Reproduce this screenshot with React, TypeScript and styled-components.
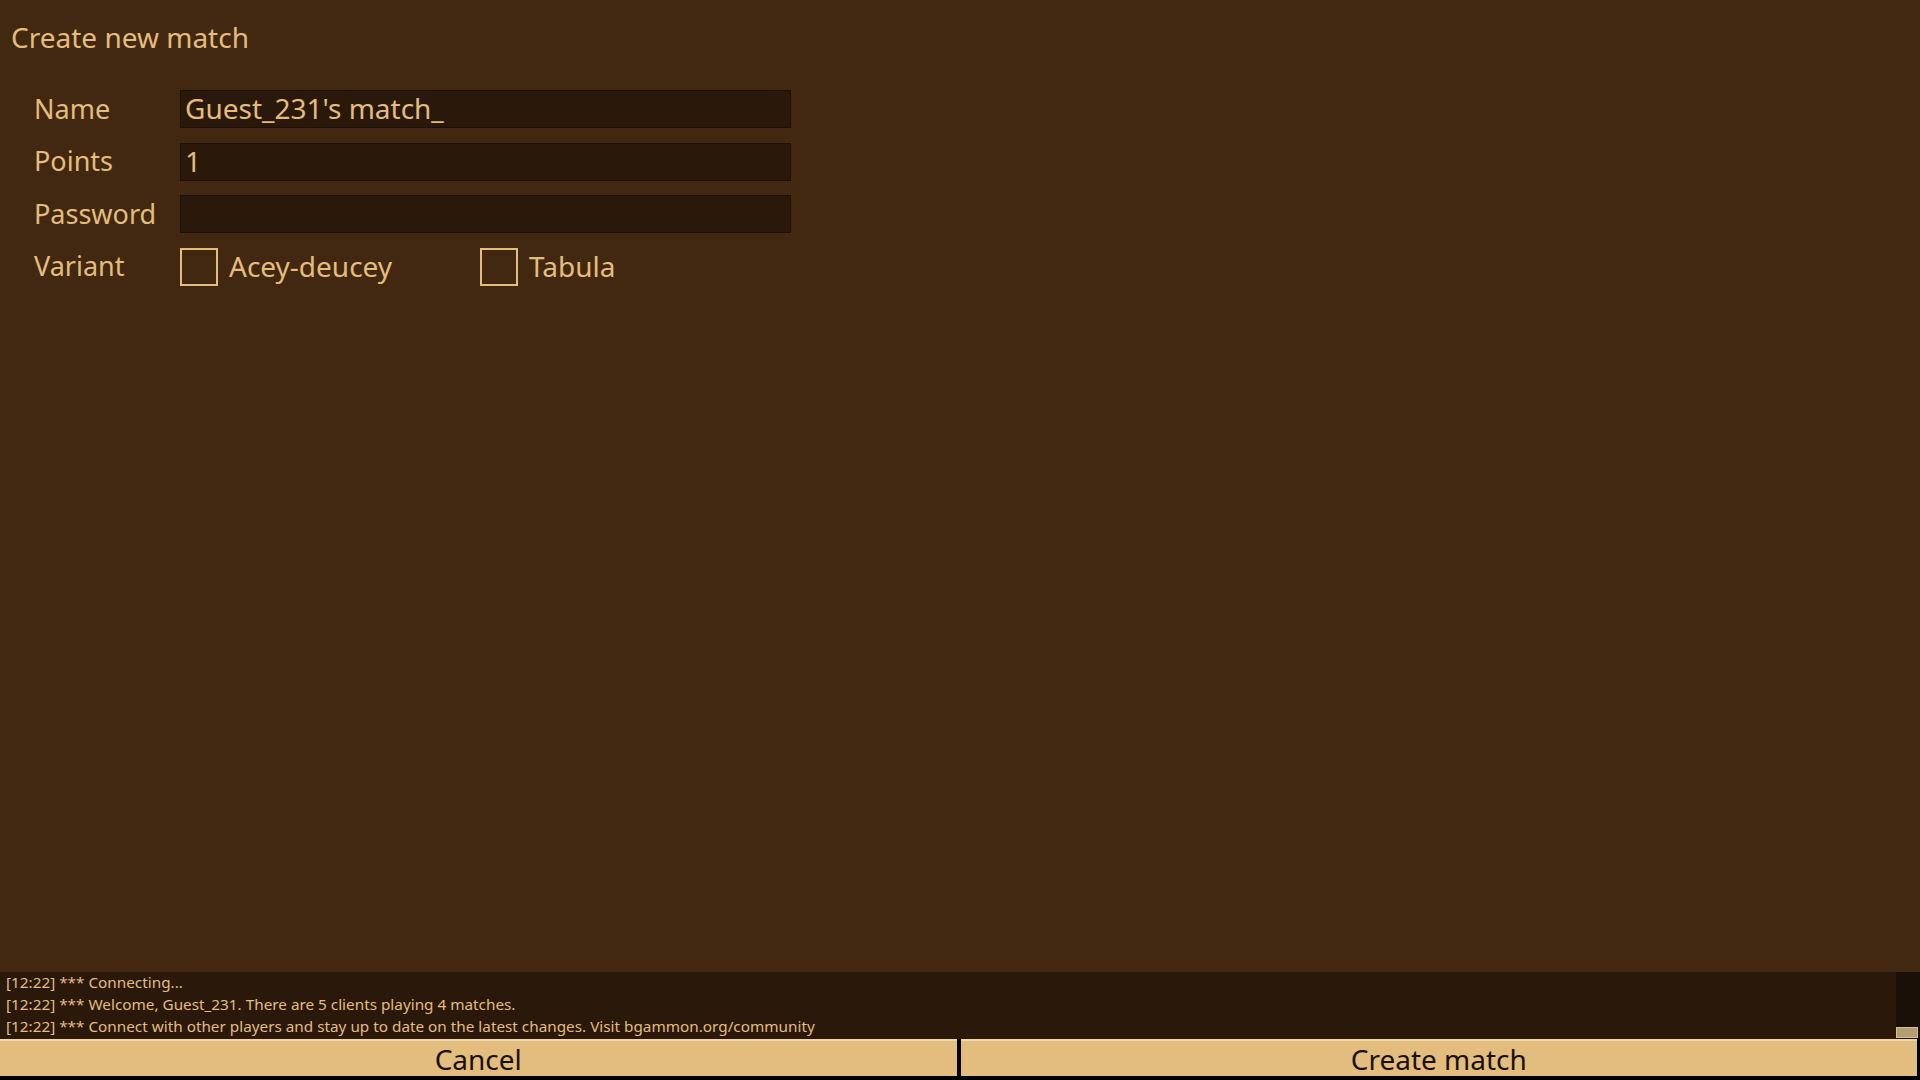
import React from 'react';
import styled, { createGlobalStyle } from 'styled-components';

const GlobalStyle = createGlobalStyle`
    html, body {
        margin: 0;
        padding: 0;
        background: #000;
    }
    * {
        box-sizing: border-box;
    }
`;

const FONT = `"Noto Sans", "Open Sans", sans-serif`;
const TAN = '#e3bd7e';

const logLines = [
    '[12:22] *** Connecting...',
    '[12:22] *** Welcome, Guest_231. There are 5 clients playing 4 matches.',
    '[12:22] *** Connect with other players and stay up to date on the latest changes. Visit bgammon.org/community',
];

const App = () => {
    return (
        <>
            <GlobalStyle />
            <Screen>
                <Main>
                    <Title>Create new match</Title>
                    <Form>
                        <Label>Name</Label>
                        <Field>Guest_231's match_</Field>
                        <Label>Points</Label>
                        <Field>1</Field>
                        <Label>Password</Label>
                        <Field />
                        <Label>Variant</Label>
                        <Variants>
                            <Option $width={300}>
                                <Box />
                                <span>Acey-deucey</span>
                            </Option>
                            <Option>
                                <Box />
                                <span>Tabula</span>
                            </Option>
                        </Variants>
                    </Form>
                </Main>
                <Log>
                    <LogText>
                        {logLines.map((line) => (
                            <LogLine key={line}>{line}</LogLine>
                        ))}
                    </LogText>
                    <ScrollTrack>
                        <ScrollThumb />
                    </ScrollTrack>
                </Log>
                <Buttons>
                    <Button>Cancel</Button>
                    <Button>Create match</Button>
                </Buttons>
            </Screen>
        </>
    );
};

export default App;

const Screen = styled.div`
    width: 1920px;
    height: 1080px;
    display: flex;
    flex-direction: column;
    background: #422811;
    font-family: ${FONT};
    color: ${TAN};
    overflow: hidden;
`;

const Main = styled.div`
    flex: 1;
    padding: 19px 0 0 11px;
`;

const Title = styled.div`
    font-size: 28px;
    line-height: 36px;
    height: 36px;
`;

const Form = styled.div`
    display: grid;
    grid-template-columns: 146px 611px;
    grid-auto-rows: 38px;
    row-gap: 14.5px;
    margin: 35px 0 0 23px;
`;

const Label = styled.div`
    display: flex;
    align-items: center;
    font-size: 27px;
    margin-top: -2px;
`;

const Field = styled.div`
    display: flex;
    align-items: center;
    padding: 0 4px 2px;
    background: #2a190b;
    border: 1px solid #1c1007;
    font-size: 28px;
    white-space: pre;
`;

const Variants = styled.div`
    display: flex;
    align-items: center;
`;

const Option = styled.div<{ $width?: number }>`
    display: flex;
    align-items: center;
    gap: 11px;
    width: ${(p) => (p.$width ? `${p.$width}px` : 'auto')};
    font-size: 28px;

    & > span {
        margin-top: -2px;
    }
`;

const Box = styled.div`
    flex: none;
    width: 38px;
    height: 38px;
    border: 2px solid ${TAN};
`;

const Log = styled.div`
    height: 67px;
    display: flex;
    background: #2a180b;
`;

const LogText = styled.div`
    flex: 1;
    padding-left: 6px;
    margin-top: -1px;
    font-size: 15.3px;
    line-height: 22px;
`;

const LogLine = styled.div`
    white-space: nowrap;
`;

const ScrollTrack = styled.div`
    width: 24px;
    display: flex;
    flex-direction: column;
    justify-content: flex-end;
    background: #1a1007;
    padding: 0 2px 1px 0;
`;

const ScrollThumb = styled.div`
    height: 11px;
    background: #b59d72;
    border: 1px solid #d8c092;
`;

const Buttons = styled.div`
    height: 41px;
    display: flex;
    gap: 4px;
    padding: 0 3px 4px 0;
    background: #000;
`;

const Button = styled.div`
    flex: 1;
    display: flex;
    align-items: center;
    justify-content: center;
    background: #e2bd7e;
    border-top: 2px solid #f2d7a6;
    color: #1a1007;
    font-size: 28px;
`;
